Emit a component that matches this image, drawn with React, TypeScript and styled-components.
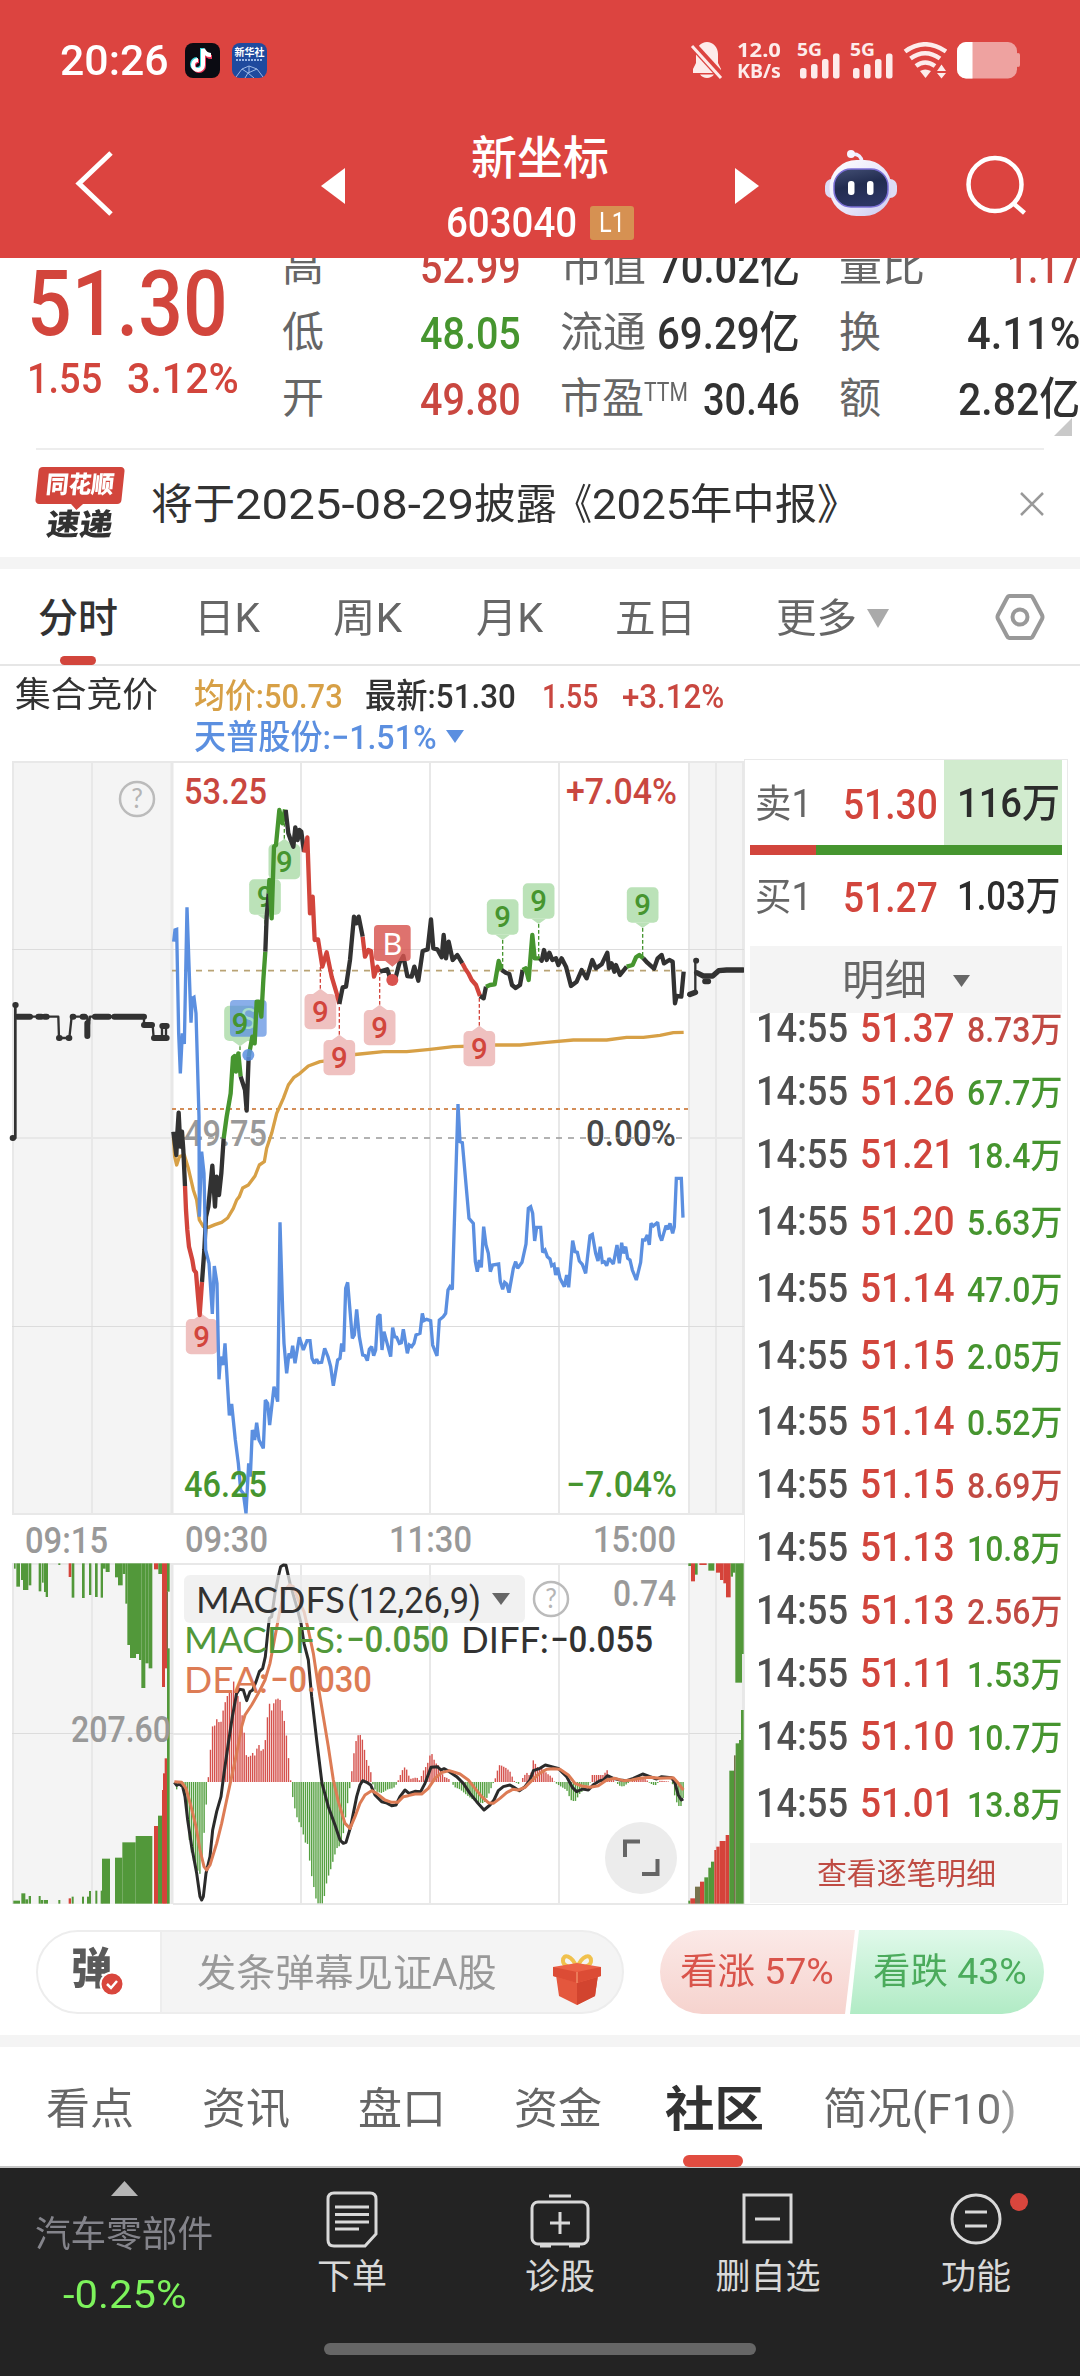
import { ReactNode, useLayoutEffect, useRef, useState } from 'react';
import styled, { createGlobalStyle } from 'styled-components';

const RED = '#d2453c';
const GREEN = '#46952f';
const DARK = '#323232';
const GREY = '#666';
const BLUE = '#5b8fe0';
const GOLD = '#d7a046';
const FONT = `Roboto, 'Noto Sans CJK SC', sans-serif`;

const GlobalStyle = createGlobalStyle`
  * { box-sizing: border-box; }
  body { margin: 0; background: #fff; font-family: ${FONT}; }
  svg { display: block; flex: none; }
`;

const Page = styled.div`
  display: flex;
  flex-direction: column;
  width: 1080px;
  height: 2376px;
  overflow: hidden;
  background: #fff;
`;

/* ---------- text squeezed to a given width ---------- */

const FitBox = styled.span<{ $w: number }>`
  display: inline-block;
  flex: none;
  width: ${(p) => p.$w}px;
  line-height: 1;
`;

const FitInner = styled.span`
  display: inline-block;
  white-space: pre;
  transform-origin: left center;
`;

function Fit({ w, children }: { w: number; children: ReactNode }) {
  const ref = useRef<HTMLSpanElement>(null);
  const [scale, setScale] = useState(1);

  useLayoutEffect(() => {
    if (ref.current) setScale(w / ref.current.offsetWidth);
  }, [w]);

  return (
    <FitBox $w={w}>
      <FitInner ref={ref} style={{ transform: `scaleX(${scale})` }}>
        {children}
      </FitInner>
    </FitBox>
  );
}

/* ---------- header ---------- */

const Header = styled.header`
  height: 258px;
  flex: none;
  background: #dc4440;
  color: #fff;
`;

const StatusBar = styled.div`
  display: flex;
  align-items: center;
  justify-content: space-between;
  height: 120px;
  padding: 0 59px 0 60px;
`;

const StatusGroup = styled.div<{ $gap: number }>`
  display: flex;
  align-items: center;
  gap: ${(p) => p.$gap}px;
`;

const Clock = styled.div`
  font-size: 42px;
  font-weight: 500;
  padding-right: 4px;
`;

const AppIcon = styled.div<{ $bg: string }>`
  display: flex;
  flex-direction: column;
  align-items: center;
  width: 35px;
  height: 35px;
  border-radius: 8px;
  background: ${(p) => p.$bg};
  overflow: hidden;
`;

const TinyTitle = styled.div`
  margin-top: 4px;
  font-size: 10px;
  line-height: 11px;
  font-weight: 700;
`;

const Speed = styled.div`
  display: flex;
  flex-direction: column;
  gap: 1px;
  margin: 0 6px 0 3px;
  font-family: 'Noto Sans', sans-serif;
  font-size: 20px;
  font-weight: 700;
  line-height: 20px;
  color: #fdeceb;
`;

const TitleBar = styled.div`
  display: grid;
  grid-template-columns: 321px 438px 1fr;
  height: 138px;
`;

const BackCell = styled.div`
  padding: 30px 0 0 74px;
`;

const StockCell = styled.div`
  display: flex;
  justify-content: space-between;
  padding-top: 12px;
`;

const Arrow = styled.div`
  padding-top: 36px;
`;

const StockName = styled.div`
  display: flex;
  flex-direction: column;
  align-items: center;
  font-size: 46px;
  line-height: 52px;
  font-weight: 500;
`;

const CodeLine = styled.div`
  display: flex;
  align-items: center;
  gap: 13px;
  height: 36px;
  margin-top: 21px;
  font-size: 42px;
`;

const Level = styled.span`
  display: flex;
  align-items: center;
  justify-content: center;
  width: 44px;
  height: 34px;
  border-radius: 3px;
  background: #d69152;
  font-size: 28px;
  font-weight: 400;
`;

const HeaderTools = styled.div`
  display: flex;
  padding: 28px 0 0 64px;
  gap: 66px;
`;

/* ---------- quote ---------- */

const Quote = styled.section`
  display: flex;
  height: 190px;
  flex: none;
  overflow: hidden;
  position: relative;
`;

const PriceBlock = styled.div`
  flex: none;
  width: 282px;
  padding: 0 0 0 27px;
  color: ${RED};
`;

const Price = styled.div`
  height: 90px;
  display: flex;
  align-items: center;
  padding-top: 3px;
  font-size: 90px;
  font-weight: 500;
`;

const Change = styled.div`
  display: flex;
  align-items: center;
  gap: 25px;
  height: 60px;
  font-size: 43px;
  font-weight: 500;
`;

const StatCol = styled.div<{ $w: number }>`
  width: ${(p) => p.$w}px;
  margin: -24px 39px 0 0;
  flex: none;

  &:last-of-type {
    margin-right: 0;
  }
`;

const Stat = styled.div`
  display: flex;
  align-items: center;
  justify-content: space-between;
  height: 66px;
  font-size: 42px;
`;

const StatLabel = styled.span`
  color: ${GREY};
  display: flex;
  white-space: nowrap;
`;

const Sup = styled.span`
  font-size: 25px;
  line-height: 1;
  padding-top: 2px;
`;

const StatValue = styled.span<{ $c?: string }>`
  color: ${(p) => p.$c || DARK};
  font-size: 45px;
  font-weight: 500;
  display: flex;
`;

const Corner = styled.div`
  position: absolute;
  left: 1054px;
  top: 160px;
  border-left: 18px solid transparent;
  border-bottom: 18px solid #c9c9c9;
`;

/* ---------- notice ---------- */

const Notice = styled.section`
  display: flex;
  align-items: center;
  height: 109px;
  flex: none;
  margin: 0 36px;
  border-top: 2px solid #ededed;
  font-size: 42px;
  color: ${DARK};
`;

const NoticeLogo = styled.div`
  display: flex;
  flex-direction: column;
  align-items: center;
  width: 88px;
  margin-right: 27px;
`;

const NoticeText = styled.div`
  display: flex;
  padding-top: 2px;
`;

const LogoBubble = styled.div`
  position: relative;
  width: 86px;
  height: 37px;
  border-radius: 4px;
  background: ${RED};
  color: #fff;
  font-size: 24px;
  font-weight: 900;
  line-height: 36px;
  text-align: center;
  transform: skewX(-6deg);

  &::after {
    content: '';
    position: absolute;
    left: 36px;
    bottom: -6px;
    border: 6px solid transparent;
    border-bottom: none;
    border-top-color: ${RED};
  }
`;

const LogoText = styled.div`
  margin-top: 5px;
  font-size: 30px;
  line-height: 32px;
  font-weight: 900;
  transform: skewX(-8deg);
`;

const NoticeClose = styled.div`
  margin-left: auto;
`;

const Band = styled.div`
  height: 12px;
  flex: none;
  background: #f4f4f4;
`;

/* ---------- period tabs ---------- */

const PeriodTabs = styled.nav`
  display: flex;
  align-items: center;
  height: 97px;
  flex: none;
  padding: 0 35px 0 38px;
  border-bottom: 2px solid #e6e6e6;
`;

const Period = styled.div<{ $active?: boolean; $ml?: number }>`
  position: relative;
  display: flex;
  align-items: center;
  gap: 10px;
  height: 95px;
  padding-top: 4px;
  margin-left: ${(p) => p.$ml || 0}px;
  font-size: 40px;
  font-weight: ${(p) => (p.$active ? 500 : 400)};
  color: ${(p) => (p.$active ? DARK : GREY)};

  &::after {
    content: '';
    display: ${(p) => (p.$active ? 'block' : 'none')};
    position: absolute;
    left: 22px;
    bottom: -1px;
    width: 36px;
    height: 9px;
    border-radius: 5px;
    background: ${RED};
  }
`;

const HexCell = styled.div`
  margin-left: auto;
`;

/* ---------- legend ---------- */

const Legend = styled.div`
  display: flex;
  height: 93px;
  flex: none;
  padding: 9px 0 0 15px;
  font-size: 35px;
  color: ${DARK};
`;

const LegendLines = styled.div`
  margin-left: 36px;
`;

const LegendLine = styled.div`
  display: flex;
  align-items: center;
  height: 41px;
  font-size: 34px;
`;

const LegendItem = styled.span<{ $c: string; $mr?: number }>`
  display: flex;
  align-items: center;
  margin-right: ${(p) => p.$mr || 0}px;
  color: ${(p) => p.$c};
  font-weight: 500;
`;

const LegendName = styled.div`
  display: flex;
  align-items: center;
  height: 41px;
`;

/* ---------- chart + order book ---------- */

const Market = styled.section`
  display: flex;
  height: 1146px;
  flex: none;
`;

const Book = styled.aside`
  display: flex;
  flex-direction: column;
  width: 324px;
  padding: 0 5px;
  border: 1px solid #e9e9e9;
`;

const BookRow = styled.div<{ $h: number }>`
  display: grid;
  grid-template-columns: 89px 105px 118px;
  height: ${(p) => p.$h}px;
  flex: none;
  font-size: 43px;
`;

const BookSide = styled.div`
  display: flex;
  align-items: center;
  padding: 3px 0 0 5px;
  color: ${GREY};
  font-size: 39px;
`;

const BookPrice = styled.div`
  display: flex;
  align-items: center;
  padding: 3px 0 0 4px;
  color: ${RED};
  font-weight: 500;
`;

const BookVol = styled.div<{ $fill?: boolean }>`
  display: flex;
  align-items: center;
  justify-content: flex-end;
  padding: 3px 2px 0 0;
  font-size: 40px;
  font-weight: 500;
  color: #2c2c2c;
  background: ${(p) => (p.$fill ? '#d1ebce' : 'none')};
`;

const Ratio = styled.div`
  height: 10px;
  flex: none;
  background: linear-gradient(to right, ${RED} 66px, ${GREEN} 66px);
`;

const DetailHead = styled.div`
  position: relative;
  display: flex;
  align-items: center;
  gap: 26px;
  height: 67px;
  flex: none;
  margin-top: 10px;
  padding: 3px 0 0 92px;
  background: #f4f4f4;
  color: ${GREY};
  font-size: 42px;
`;

const Trades = styled.div`
  flex: 1;
  overflow: hidden;
`;

const TradeList = styled.div`
  margin-top: -15px;
`;

const Trade = styled.div<{ $gap: number }>`
  display: flex;
  align-items: center;
  height: 60px;
  margin-top: ${(p) => p.$gap}px;
  padding-left: 6px;
  font-size: 41px;
  font-weight: 500;
  color: #505050;
`;

const TradePrice = styled.span`
  display: flex;
  margin: 0 12px;
  color: ${RED};
`;

const TradeVol = styled.span<{ $up?: boolean }>`
  display: flex;
  padding-top: 5px;
  font-size: 35px;
  color: ${(p) => (p.$up ? '#c14a43' : GREEN)};
`;

const AllTrades = styled.div`
  display: flex;
  align-items: center;
  justify-content: center;
  height: 60px;
  flex: none;
  margin-bottom: 1px;
  padding-top: 2px;
  background: #f4f4f4;
  color: #bf4b43;
  font-size: 30px;
`;

/* ---------- danmaku ---------- */

const Danmaku = styled.section`
  display: flex;
  justify-content: space-between;
  height: 130px;
  flex: none;
  padding: 25px 36px 0;
`;

const InputPill = styled.div`
  display: flex;
  width: 588px;
  height: 84px;
  border: 2px solid #ededed;
  border-radius: 42px;
  background: #f4f4f4;
  overflow: hidden;
`;

const DanToggle = styled.div`
  position: relative;
  display: flex;
  align-items: center;
  width: 124px;
  padding: 0 0 6px 33px;
  border-right: 2px solid #ededed;
  background: #fff;
  color: #5a5a5a;
  font-size: 43px;
  font-weight: 900;
`;

const DanCheck = styled.div`
  position: absolute;
  left: 61px;
  top: 39px;
`;

const DanHint = styled.div`
  display: flex;
  align-items: center;
  padding: 2px 0 0 35px;
  font-size: 38px;
  color: #999;
`;

const GiftCell = styled.div`
  padding: 21px 0 0 55px;
`;

const Votes = styled.div`
  display: flex;
  width: 384px;
  height: 84px;
  border-radius: 42px;
  overflow: hidden;
`;

const Vote = styled.div<{ $up?: boolean }>`
  display: flex;
  align-items: center;
  width: ${(p) => (p.$up ? 195 : 194)}px;
  margin-left: ${(p) => (p.$up ? 0 : -5)}px;
  padding-left: ${(p) => (p.$up ? 20 : 23)}px;
  font-size: 36px;
  color: ${(p) => (p.$up ? '#d9544b' : '#4bab5c')};
  background: ${(p) =>
    p.$up ? 'linear-gradient(#fbe9e7, #f6d3ce)' : 'linear-gradient(#e0f9ea, #b1ebc5)'};
  clip-path: ${(p) =>
    p.$up
      ? 'polygon(0 0, 100% 0, calc(100% - 10px) 100%, 0 100%)'
      : 'polygon(9px 0, 100% 0, 100% 100%, 0 100%)'};
`;

/* ---------- section tabs and bottom bar ---------- */

const SectionTabs = styled.nav`
  display: flex;
  height: 121px;
  flex: none;
  padding-left: 46px;
  border-bottom: 2px solid #c6c6c6;
`;

const SectionTab = styled.div<{ $active?: boolean; $ml?: number; $fade?: boolean }>`
  position: relative;
  display: flex;
  align-items: center;
  height: 125px;
  margin-left: ${(p) => p.$ml || 0}px;
  font-size: ${(p) => (p.$active ? 48 : 43)}px;
  font-weight: ${(p) => (p.$active ? 700 : 400)};
  color: ${(p) => (p.$active ? DARK : GREY)};
  ${(p) => p.$fade && 'mask-image: linear-gradient(to right, #000 85%, rgba(0, 0, 0, 0.5));'}

  &::after {
    content: '';
    display: ${(p) => (p.$active ? 'block' : 'none')};
    position: absolute;
    left: 18px;
    top: 108px;
    width: 60px;
    height: 12px;
    border-radius: 6px;
    background: #e14c40;
  }
`;

const BottomBar = styled.footer`
  position: relative;
  display: grid;
  grid-template-columns: 248px repeat(4, 208px);
  height: 208px;
  flex: none;
  background: #232323;
`;

const Sector = styled.div`
  display: flex;
  flex-direction: column;
  align-items: center;
  padding-top: 13px;
  color: #84848b;
  font-size: 36px;
`;

const SectorName = styled.div`
  margin-top: 18px;
  height: 40px;
`;

const SectorChange = styled.div`
  margin-top: 19px;
  color: #7df35c;
  font-size: 38px;
`;

const Action = styled.div`
  position: relative;
  display: flex;
  flex-direction: column;
  align-items: center;
  padding-top: 22px;
  color: #d9d9d9;
  font-size: 35px;
  line-height: 40px;
`;

const ActionLabel = styled.div`
  margin-top: 10px;
`;

const Dot = styled.div`
  position: absolute;
  left: 138px;
  top: 25px;
  width: 18px;
  height: 18px;
  border-radius: 50%;
  background: #d9463d;
`;

const HomeBar = styled.div`
  position: absolute;
  left: 324px;
  top: 175px;
  width: 432px;
  height: 12px;
  border-radius: 6px;
  background: #666;
`;

/* ---------- small drawings ---------- */

function Triangle({ w, h, dir, color }: { w: number; h: number; dir: string; color: string }) {
  const shapes: Record<string, string> = {
    left: `${w},0 0,${h / 2} ${w},${h}`,
    right: `0,0 ${w},${h / 2} 0,${h}`,
    up: `0,${h} ${w / 2},0 ${w},${h}`,
    down: `0,0 ${w},0 ${w / 2},${h}`,
  };
  return (
    <svg width={w} height={h}>
      <polygon points={shapes[dir]} fill={color} />
    </svg>
  );
}

function Signal() {
  return (
    <svg width="43" height="37" viewBox="0 0 43 37" fill="#fdeceb" overflow="visible">
      <text
        x="0"
        y="14"
        fontSize="18"
        fontWeight="700"
        fontFamily="Noto Sans"
        textLength="25"
        lengthAdjust="spacingAndGlyphs"
      >
        5G
      </text>
      <rect x="3" y="26" width="6.500" height="10.500" rx="2.500" />
      <rect x="14" y="22" width="6.500" height="14.500" rx="2.500" />
      <rect x="25" y="17" width="6.500" height="19.500" rx="2.500" />
      <rect x="36" y="11.500" width="6.500" height="25" rx="2.500" />
    </svg>
  );
}

function StatusIcons() {
  return (
    <StatusGroup $gap={10}>
      <svg width="34" height="38" viewBox="0 0 34 38">
        <path
          d="M17 1C23 1 28 6 28 13V22L31 28V32H3V28L6 22V13C6 6 11 1 17 1zM10 33.500H24C21 38 13 38 10 33.500z"
          fill="#fdeceb"
        />
        <path d="M0 1L31 35" stroke="#dc4440" strokeWidth="8" />
        <path d="M2 5L31 37" stroke="#fdeceb" strokeWidth="3" />
      </svg>
      <Speed>
        <Fit w={44}>12.0</Fit>
        <Fit w={44}>KB/s</Fit>
      </Speed>
      <StatusGroup $gap={10}>
        <Signal />
        <Signal />
      </StatusGroup>
      <svg width="44" height="37" viewBox="0 0 44 37" fill="none" stroke="#fdeceb" strokeWidth="4.500">
        <path d="M2 9.500Q22 -5 43 9.500" />
        <path d="M7.500 16.500Q22 6 37 16.500" />
        <path d="M13 24Q22 17 32 24" />
        <path d="M17 29Q22 26 28 29L22.500 36z" fill="#fdeceb" stroke="none" />
        <path d="M34 29L38.500 22.500L43 29zM34 31L38.500 36.500L43 31z" fill="#fdeceb" stroke="none" />
      </svg>
      <svg width="64" height="37" viewBox="0 0 64 37">
        <rect x="0" y="0" width="60" height="36.500" rx="9" fill="#eea2a0" />
        <rect x="59" y="11" width="4" height="14" rx="2" fill="#eea2a0" />
        <path d="M9 0H15.500V36.500H9A9 9 0 0 1 0 27.500V9A9 9 0 0 1 9 0z" fill="#fff" />
      </svg>
    </StatusGroup>
  );
}

function Robot() {
  return (
    <svg width="76" height="72" viewBox="0 0 76 72">
      <defs>
        <linearGradient id="shell" x1="0" y1="0" x2="1" y2="1">
          <stop offset="0" stopColor="#fff" />
          <stop offset="0.6" stopColor="#e6e4fa" />
          <stop offset="1" stopColor="#c9c8ee" />
        </linearGradient>
        <linearGradient id="visor" x1="0" y1="0" x2="0.3" y2="1">
          <stop offset="0" stopColor="#434f74" />
          <stop offset="0.5" stopColor="#222c50" />
          <stop offset="1" stopColor="#2c3563" />
        </linearGradient>
      </defs>
      <path d="M39 14Q38 6 30 6" stroke="#efedff" strokeWidth="3.500" fill="none" />
      <circle cx="28" cy="6" r="4" fill="#f6f4ff" />
      <rect x="2" y="31" width="72" height="19" rx="7" fill="#dddcf5" />
      <rect x="6.500" y="12" width="62" height="56" rx="27" fill="url(#shell)" />
      <rect x="11" y="21" width="54" height="38" rx="17" fill="url(#visor)" stroke="#7b6fd6" strokeWidth="1.500" />
      <rect x="25" y="33" width="6.500" height="14" rx="3" fill="#fff" />
      <rect x="44" y="33" width="6.500" height="14" rx="3" fill="#fff" />
    </svg>
  );
}

function Gift() {
  return (
    <svg width="50" height="53" viewBox="0 0 50 53">
      <path d="M25 15C20 2 11 0 11 8c0 5 8 7 14 7 6 0 14-2 14-7 0-8-9-6-14 7z" fill="none" stroke="#f0c14d" strokeWidth="4" />
      <path d="M4 22 L25 27 L46 22 L43 43 L25 52 L7 43z" fill="#e4573d" />
      <path d="M25 27 L46 22 L43 43 L25 52z" fill="#d2442f" />
      <path d="M1 14 L25 10 L49 14 V23 L25 30 L1 23z" fill="#ec6247" />
      <path d="M1 14 L25 19 L49 14 V23 L25 30 L1 23z" fill="#dc4c35" />
      <path d="M25 19 V30" stroke="#f08a66" strokeWidth="1.500" />
    </svg>
  );
}

/* ---------- chart data, in thirds of a pixel ---------- */

const PRICE: [string, string][] = [
  [DARK, '520,1145 529,1215 532,1150 536,1088 541,1190 546,1145 550,1200 555,1308'],
  [RED, '555,1308 558,1380 562,1440 567,1490 577,1530 582,1560 588,1568 594,1640 599,1695 606,1596'],
  [DARK, '606,1596 613,1500 618,1400 625,1370 632,1300 637,1247 645,1370 650,1280 657,1335 664,1270 671,1165'],
  [GREEN, '671,1165 680,1100 692,1030 699,922 704,918 708,965 715,910 722,980'],
  [DARK, '722,980 735,1020 740,1082 746,920'],
  [GREEN, '746,920 757,860 764,880 770,755 777,755 784,800 790,690 796,605'],
  [DARK, '796,605 800,500 806,430'],
  [GREEN, '806,430 808,390 815,505 822,290 828,285 838,180 847,220 855,178'],
  [DARK, '857,180 865,250 872,270 880,290 886,232 893,270 898,240 904,245 912,305'],
  [RED, '913,308 922,262 930,490 938,440 944,570 954,568 967,650 980,607 995,680 1010,730 1018,762'],
  [DARK, '1018,762 1028,712 1038,710 1050,630 1062,500 1070,520 1076,500 1088,560'],
  [RED, '1088,560 1095,620 1105,600 1113,603 1122,680 1132,650 1140,665'],
  [DARK, '1140,665 1162,658 1172,690 1185,690 1198,640 1210,618 1222,678 1235,680 1243,650 1255,692 1268,603 1283,598 1293,508 1300,595 1312,598 1325,622 1331,555 1338,625 1346,575 1358,630 1372,615 1387,640'],
  [RED, '1387,640 1395,655 1405,670 1415,690 1428,705 1440,738'],
  [DARK, '1440,738 1451,745 1458,710'],
  [GREEN, '1458,710 1470,705 1484,703 1496,633 1505,660'],
  [DARK, '1505,660 1517,668 1528,672 1536,705 1547,714 1560,705 1568,660'],
  [GREEN, '1568,660 1577,655 1586,690 1597,555 1604,625 1620,625'],
  [DARK, '1620,625 1625,632 1632,600 1640,630 1648,608 1657,630 1668,625 1675,645 1685,625 1698,650 1713,708 1730,695 1745,660 1760,685 1777,630 1788,655 1805,643 1822,608 1827,655 1835,640 1843,665 1848,645 1860,675 1880,650'],
  [GREEN, '1880,650 1898,645 1908,622 1918,615 1930,625'],
  [DARK, '1930,625 1942,638 1962,656 1973,625 1985,615 1992,640 2008,630 2018,635 2025,760 2030,738 2044,740 2051,665'],
];

const AVERAGE =
  '520,1160 524,1220 530,1245 538,1220 553,1215 565,1255 580,1320 590,1350 598,1410 610,1430 625,1432 645,1424 665,1417 683,1404 700,1375 710,1350 718,1340 728,1314 745,1305 765,1278 778,1245 793,1235 800,1195 815,1150 830,1090 850,1045 865,1005 882,982 900,970 925,948 960,935 1000,930 1050,915 1080,912 1150,905 1220,905 1290,898 1360,890 1430,888 1480,885 1560,885 1640,877 1720,870 1820,870 1880,862 1930,862 1980,856 2020,848 2051,847';

const PEER =
  '521,575 525,540 530,538 536,850 541,970 547,850 553,882 561,472 573,818 577,745 582,742 588,790 597,1100 598,1400 605,1205 612,1270 617,1500 627,1540 637,1692 643,1548 651,1600 657,1888 662,1820 670,1845 675,1780 688,1996 695,1962 706,2070 715,2140 722,2220 730,2230 738,2290 746,2140 751,2180 757,2040 764,2070 770,2018 777,2070 790,2095 796,1950 803,1960 809,2025 822,1910 833,1955 840,1417 848,1680 852,1780 860,1870 867,1810 872,1825 878,1787 885,1840 898,1762 910,1800 921,1772 930,1772 936,1825 943,1840 950,1828 955,1838 965,1837 974,1795 984,1820 992,1850 1000,1907 1013,1830 1020,1825 1025,1780 1031,1805 1037,1615 1043,1597 1057,1765 1063,1755 1070,1678 1078,1760 1088,1815 1095,1817 1102,1832 1108,1798 1115,1790 1121,1817 1127,1800 1133,1700 1140,1693 1146,1800 1152,1745 1160,1775 1172,1820 1178,1733 1184,1760 1190,1762 1198,1780 1204,1778 1210,1738 1222,1810 1228,1785 1235,1790 1242,1780 1248,1755 1260,1750 1267,1690 1272,1712 1280,1708 1292,1712 1298,1785 1311,1818 1318,1710 1330,1700 1337,1690 1344,1620 1350,1610 1357,1618 1374,1062 1380,1175 1387,1178 1407,1405 1420,1420 1426,1535 1432,1565 1438,1530 1444,1552 1451,1430 1458,1485 1465,1510 1471,1565 1478,1545 1496,1542 1501,1595 1508,1618 1514,1597 1520,1602 1527,1628 1540,1555 1547,1535 1553,1555 1566,1537 1578,1482 1585,1375 1592,1370 1598,1390 1604,1473 1610,1432 1622,1432 1628,1507 1635,1500 1642,1520 1650,1527 1655,1547 1662,1543 1667,1575 1673,1553 1680,1585 1693,1610 1700,1575 1706,1612 1718,1472 1725,1505 1732,1507 1738,1533 1747,1543 1757,1570 1770,1457 1777,1453 1787,1510 1794,1533 1801,1490 1807,1537 1813,1535 1820,1547 1827,1525 1840,1542 1851,1485 1858,1540 1865,1478 1870,1510 1877,1490 1883,1525 1890,1530 1897,1560 1909,1590 1922,1537 1928,1470 1935,1470 1942,1455 1948,1485 1953,1420 1960,1428 1973,1417 1979,1457 1985,1472 1998,1427 2004,1438 2010,1420 2018,1450 2023,1430 2029,1285 2044,1285 2049,1403';

const DIFF =
  '523,697 530,706 538,702 548,710 555,740 563,810 575,890 590,970 600,1040 605,1050 610,1040 618,970 630,920 638,840 650,785 663,740 672,670 685,580 697,500 710,430 718,418 730,420 740,452 750,425 758,420 768,395 778,365 788,355 796,320 803,250 808,205 815,200 825,130 835,80 842,50 850,45 858,46 870,100 890,170 903,220 912,280 925,330 935,440 950,570 966,700 985,770 1005,825 1020,870 1030,880 1038,877 1052,830 1070,740 1080,705 1088,692 1100,697 1112,705 1125,735 1145,755 1158,758 1175,767 1188,765 1200,740 1215,720 1227,730 1245,724 1262,725 1275,700 1293,652 1312,650 1323,660 1332,656 1348,665 1370,680 1390,700 1410,730 1430,755 1452,780 1470,765 1482,750 1495,722 1510,710 1530,705 1542,712 1558,722 1575,710 1590,690 1600,662 1620,655 1636,645 1655,650 1675,655 1700,680 1717,712 1730,725 1748,717 1765,720 1780,704 1798,693 1810,690 1822,677 1840,685 1860,690 1880,692 1900,685 1928,672 1950,680 1970,687 1985,680 2015,683 2025,700 2035,735 2044,750 2050,747';

const DEA =
  '523,695 545,697 558,715 572,765 588,830 600,900 612,950 620,960 630,945 650,880 665,820 680,750 695,680 710,610 725,530 735,495 755,465 775,430 795,390 810,340 825,260 840,180 855,120 868,105 880,110 895,150 912,185 925,240 940,310 955,410 970,500 985,590 1000,690 1015,755 1035,820 1050,835 1065,800 1080,760 1095,735 1115,722 1130,730 1155,750 1175,757 1193,757 1210,740 1225,737 1245,732 1265,732 1285,715 1305,685 1325,668 1348,662 1380,672 1405,690 1425,715 1445,740 1465,758 1480,760 1500,745 1520,728 1538,718 1555,720 1575,712 1595,692 1615,673 1640,658 1660,656 1680,658 1705,675 1725,700 1745,708 1770,712 1795,707 1820,690 1845,685 1870,692 1895,690 1920,685 1950,682 1980,685 2020,683 2035,700 2050,720';

const HISTOGRAM =
  '525,700 530,718 536,700 547,715 555,740 570,890 585,950 600,972 608,900 613,840 620,745 626,668 632,590 638,525 645,527 651,505 657,517 664,515 670,477 676,455 683,435 695,420 702,390 708,430 715,440 722,462 728,510 734,560 740,628 747,618 753,617 759,607 765,618 772,590 778,584 784,605 790,597 797,565 803,492 810,453 816,488 823,450 836,445 842,452 848,492 855,522 861,572 867,642 873,703 880,755 890,800 905,835 918,885 925,880 931,962 938,990 945,1033 951,1060 968,1060 975,1030 981,990 990,965 1000,930 1010,895 1022,885 1030,850 1038,790 1045,745 1051,700 1058,642 1064,590 1070,565 1077,550 1083,558 1090,577 1096,617 1102,638 1108,652 1114,672 1120,712 1130,725 1145,729 1165,717 1180,715 1188,705 1196,688 1204,667 1210,655 1217,650 1223,668 1230,687 1250,682 1260,693 1268,665 1275,655 1285,635 1293,603 1300,625 1308,640 1320,650 1330,680 1345,685 1355,699 1365,712 1380,718 1400,735 1420,750 1440,758 1452,760 1465,735 1477,705 1488,680 1496,645 1505,647 1520,655 1532,667 1540,690 1548,698 1555,702 1563,695 1570,680 1580,668 1592,680 1598,628 1605,640 1615,655 1625,650 1640,670 1655,680 1665,698 1680,708 1700,720 1712,750 1725,755 1740,730 1755,718 1770,700 1777,675 1810,675 1821,660 1830,680 1845,695 1860,708 1870,710 1883,700 1900,690 1920,683 1938,688 1950,700 1965,707 1980,692 2010,695 2020,705 2025,745 2035,768 2045,768 2050,740';

// x, width, far end; hanging from the top or standing on the bottom edge
type Bar = [number, number, number, 'r' | 'g' | 'd'];

const TOP_BARS: Bar[] = [
  [42, 5, 56, 'g'], [49, 11, 110, 'g'], [63, 6, 90, 'g'], [69, 16, 120, 'g'], [86, 8, 106, 'g'],
  [116, 8, 124, 'g'], [126, 5, 98, 'g'], [132, 6, 126, 'g'], [137, 7, 141, 'g'], [175, 6, 45, 'g'],
  [206, 8, 81, 'r'], [215, 8, 143, 'g'], [246, 8, 144, 'g'], [267, 7, 135, 'g'], [285, 8, 141, 'g'],
  [302, 7, 143, 'g'], [308, 9, 56, 'g'], [317, 12, 66, 'g'], [345, 9, 82, 'g'], [354, 14, 106, 'g'],
  [368, 8, 72, 'g'], [376, 6, 161, 'g'], [382, 8, 285, 'g'], [390, 18, 324, 'g'], [408, 9, 312, 'g'],
  [417, 7, 330, 'g'], [424, 12, 414, 'g'], [436, 10, 340, 'g'], [446, 11, 355, 'g'], [462, 13, 58, 'r'],
  [475, 11, 72, 'g'], [486, 9, 411, 'r'], [495, 7, 355, 'r'], [501, 8, 125, 'g'],
  [2065, 8, 48, 'g'], [2073, 12, 94, 'r'], [2085, 8, 74, 'g'], [2098, 22, 45, 'r'], [2125, 18, 62, 'g'],
  [2148, 12, 68, 'r'], [2160, 10, 90, 'r'], [2170, 8, 100, 'r'], [2178, 14, 142, 'r'], [2192, 7, 80, 'g'],
  [2199, 7, 68, 'g'], [2206, 20, 398, 'g'], [2225, 6, 312, 'g'],
];

const BOTTOM_BARS: Bar[] = [
  [40, 20, 1052, 'g'], [64, 12, 1030, 'g'], [76, 8, 1048, 'g'], [86, 7, 1038, 'g'], [116, 6, 1038, 'g'],
  [122, 8, 1050, 'g'], [132, 12, 1050, 'g'], [175, 6, 1050, 'g'], [206, 7, 1045, 'r'], [215, 6, 1040, 'g'],
  [246, 6, 1040, 'g'], [261, 6, 1040, 'g'], [267, 6, 1023, 'g'], [286, 6, 1022, 'g'], [302, 5, 1022, 'g'],
  [306, 24, 926, 'g'], [345, 22, 923, 'g'], [367, 40, 877, 'g'], [407, 50, 858, 'g'], [462, 12, 828, 'r'],
  [474, 12, 797, 'g'], [486, 4, 720, 'r'], [489, 7, 670, 'r'], [494, 8, 625, 'r'], [501, 8, 295, 'g'],
  [2065, 6, 1052, 'g'], [2071, 14, 1045, 'r'], [2085, 15, 1010, 'd'], [2100, 13, 995, 'r'],
  [2113, 12, 982, 'g'], [2125, 8, 953, 'g'], [2133, 10, 935, 'g'], [2143, 6, 900, 'r'], [2149, 10, 890, 'r'],
  [2159, 18, 873, 'r'], [2177, 11, 855, 'r'], [2188, 14, 662, 'g'], [2202, 5, 616, 'd'], [2207, 10, 580, 'g'],
  [2217, 6, 570, 'g'], [2223, 8, 480, 'g'],
];

// centre x, box top, end of the dashed leader, pointer direction
const NINES: { x: number; top: number; to: number; up?: boolean; color: string }[] = [
  { x: 853, top: 282, to: 220, up: true, color: GREEN },
  { x: 795, top: 388, to: 600, color: GREEN },
  { x: 720, top: 767, to: 910, color: GREEN },
  { x: 961, top: 732, to: 650, up: true, color: RED },
  { x: 1018, top: 870, to: 765, up: true, color: RED },
  { x: 1139, top: 780, to: 670, up: true, color: RED },
  { x: 1438, top: 843, to: 740, up: true, color: RED },
  { x: 1508, top: 448, to: 655, color: GREEN },
  { x: 1616, top: 400, to: 620, color: GREEN },
  { x: 1928, top: 412, to: 620, color: GREEN },
  { x: 605, top: 567, to: 552, up: true, color: RED },
];

const parse = (s: string) => s.split(' ').map((p) => p.split(',').map(Number));

function histogramBars() {
  const pts = parse(HISTOGRAM);
  const out: { x: number; y: number }[] = [];
  let i = 0;
  for (let x = 530; x <= 2051; x += 6.33) {
    while (i < pts.length - 2 && pts[i + 1][0] < x) i++;
    const [x0, y0] = pts[i];
    const [x1, y1] = pts[i + 1];
    out.push({ x, y: y0 + ((y1 - y0) * Math.min(1, (x - x0) / (x1 - x0))) });
  }
  return out;
}

const BAR_COLORS = { r: '#d5433a', g: '#52983a', d: '#76724c' };

function ChartText(props: {
  x: number; y: number; w: number; color: string; size?: number; weight?: number; family?: string; children: string;
}) {
  return (
    <text
      x={props.x}
      y={props.y}
      fontSize={props.size || 36}
      fontWeight={props.weight || 500}
      fontFamily={props.family || 'Roboto'}
      fill={props.color}
      textLength={props.w}
      lengthAdjust="spacingAndGlyphs"
    >
      {props.children}
    </text>
  );
}

function Nine({ x, top, to, up, color }: (typeof NINES)[number]) {
  const fill = color === RED ? '#efc1c0' : '#bbe2b8';
  const bottom = top + 106;
  const tip = up ? top - 16 : bottom + 16;
  const base = up ? top : bottom;
  return (
    <g>
      <line x1={x} x2={x} y1={tip} y2={to} stroke={color} strokeWidth="4" strokeDasharray="11 7" />
      <rect x={x - 47.500} y={top} width="95" height="106" rx="15" fill={fill} />
      <polygon points={`${x - 22},${base} ${x},${tip} ${x + 22},${base}`} fill={fill} />
      <text x={x} y={top + 84} fontSize="88" fontWeight="500" fontFamily="Roboto" textAnchor="middle" fill={color}>
        9
      </text>
    </g>
  );
}

function HelpMark({ x, y }: { x: number; y: number }) {
  return (
    <g>
      <circle cx={x} cy={y} r="17" fill="none" stroke="#bbb" strokeWidth="2.500" />
      <text x={x} y={y + 9} fontSize="26" fontFamily="Lato" textAnchor="middle" fill="#b5b5b5">
        ?
      </text>
    </g>
  );
}

function Chart() {
  return (
    <svg width="744" height="1146" viewBox="0 759 744 1146">
      {/* panes and grid */}
      <g fill="#f4f4f4">
        <rect x="13" y="762" width="160" height="752" />
        <rect x="689" y="762" width="55" height="752" />
        <rect x="13" y="1564" width="160" height="340" />
        <rect x="689" y="1564" width="55" height="340" />
      </g>
      <g stroke="#e8e8e8" strokeWidth="2">
        {[13, 92, 301, 430, 559, 689, 716, 743].map((x) => (
          <path key={x} d={`M${x} 762V1514M${x} 1564V1904`} />
        ))}
        <path d="M172 762V1514M172 1564V1904" strokeWidth="3" />
        <path d="M12 762H744M12 1514H744M12 1564H744M173 1904H744M173 1734H689" />
        <path d="M12 949.500H744M12 1326.500H744M12 1733.500H173M689 1733.500H744" stroke="#dcdcdc" strokeWidth="1" />
        <path d="M12 1138H172M689 1138H744" />
      </g>

      <HelpMark x={137} y={799} />
      <ChartText x={184} y={804} w={83} color="#c94740">53.25</ChartText>
      <ChartText x={566} y={804} w={111} color="#c94740">+7.04%</ChartText>
      <ChartText x={184} y={1146} w={83} color="#999">49.75</ChartText>
      <ChartText x={586} y={1146} w={90} color="#484848">0.00%</ChartText>
      <ChartText x={566} y={1497} w={111} color={GREEN}>−7.04%</ChartText>
      <ChartText x={25} y={1553} w={83} color="#999">09:15</ChartText>
      <ChartText x={185} y={1552} w={83} color="#999">09:30</ChartText>
      <ChartText x={389} y={1552} w={83} color="#999">11:30</ChartText>
      <ChartText x={593} y={1552} w={83} color="#999">15:00</ChartText>

      {/* minute lines */}
      <g transform="translate(0 750) scale(0.33333)" fill="none" strokeLinejoin="round">
        <path d="M516 662H2051" stroke="#b9a375" strokeWidth="5" strokeDasharray="18 18" />
        <path d="M516 1077H2065" stroke="#d38d58" strokeWidth="6" strokeDasharray="12 12" />
        <path d="M516 1164H2051" stroke="#999" strokeWidth="5" strokeDasharray="18 18" />

        <g stroke={DARK} strokeLinecap="round">
          <path d="M46 765V1164H38" strokeWidth="8" />
          <path
            d="M46 800H175L177 864H208L215 800H262V858L270 800H432V825H458L461 864H486V828H498V864"
            strokeWidth="7"
          />
          <path
            d="M52 800H90M115 800H124M134 800H140M177 864H179M206 864H208M218 800H220M248 800H254M262 820V858M285 800H326M343 800H432M432 825H456M462 864H500M487 828H500M46 765H47M38 1164H39"
            strokeWidth="18"
          />
          <path d="M2065 735L2086 727V632" strokeWidth="7" />
          <path d="M2070 733L2086 727M2088 632H2089M2115 694H2125" strokeWidth="17" />
          <path d="M2090 668L2110 678L2138 678L2156 662L2180 660H2230" strokeWidth="16" />
        </g>

        <polyline points={AVERAGE} stroke={GOLD} strokeWidth="10" />
        {NINES.slice(0, 10).map((n) => (
          <Nine key={n.x} {...n} />
        ))}
        <g transform="translate(0 1140)">
          <Nine {...NINES[10]} />
        </g>
        <g>
          <rect x="690" y="750" width="110" height="110" rx="12" fill="#5b8fe0" fillOpacity="0.72" />
          <text x="745" y="836" fontSize="88" fontFamily="Lato" textAnchor="middle" fill="#a6dccb">S</text>
          <text x="720" y="851" fontSize="88" fontWeight="500" fontFamily="Roboto" textAnchor="middle" fill={GREEN}>9</text>
        </g>
        {PRICE.map(([color, points]) => (
          <polyline key={points} points={points} stroke={color} strokeWidth="13" strokeLinecap="butt" />
        ))}
        <polyline points={PEER} stroke={BLUE} strokeWidth="10" strokeLinejoin="miter" strokeMiterlimit="2" />
        <circle cx="745" cy="915" r="18" fill="#5b8fe0" fillOpacity="0.85" />
        <circle cx="1177" cy="690" r="18" fill="#d9534f" />
        <path
          d="M1134 525H1220Q1232 525 1232 537V621Q1232 633 1220 633H1198L1177 650L1156 633H1134Q1122 633 1122 621V537Q1122 525 1134 525z"
          fill="#d7534e"
          fillOpacity="0.82"
        />
        <text x="1177" y="614" fontSize="92" fontFamily="Lato" textAnchor="middle" fill="#fff">B</text>
      </g>
      <ChartText x={184} y={1497} w={83} color={GREEN}>46.25</ChartText>

      {/* call auction volume and MACD */}
      <g transform="translate(0 1550) scale(0.33333)" fill="none" strokeLinejoin="round">
        {TOP_BARS.map(([x, w, y, c]) => (
          <rect key={x} x={x} y="40" width={w} height={y - 40} fill={BAR_COLORS[c]} />
        ))}
        {BOTTOM_BARS.map(([x, w, y, c]) => (
          <rect key={x} x={x} y={y} width={w} height={1061 - y} fill={BAR_COLORS[c]} />
        ))}
        <path d="M502 125V300" stroke="#76724c" strokeWidth="4" />
        {histogramBars().map(({ x, y }) => (
          <rect
            key={x}
            x={x - 2}
            y={Math.min(y, 696)}
            width="4.200"
            height={Math.abs(y - 696)}
            fill={y < 696 ? '#d5514c' : '#55a041'}
          />
        ))}
        <polyline points={DIFF} stroke="#2b2b2b" strokeWidth="9" />
        <polyline points={DEA} stroke="#dd7c55" strokeWidth="9" />
      </g>
      <ChartText x={71} y={1742} w={100} color="#999">207.60</ChartText>

      <rect x="184" y="1575" width="341" height="48" rx="6" fill="#ececec" fillOpacity="0.75" />
      <ChartText x={196} y={1613} w={149} size={37} weight={400} family="Lato" color={DARK}>MACDFS</ChartText>
      <ChartText x={347} y={1613} w={134} size={36} weight={400} color={DARK}>(12,26,9)</ChartText>
      <polygon points="492,1593 510,1593 501,1605" fill="#666" />
      <HelpMark x={551} y={1599} />
      <ChartText x={613} y={1606} w={63} color="#999">0.74</ChartText>
      <ChartText x={184} y={1653} w={160} size={37} weight={400} family="Lato" color="#52983a">MACDFS:</ChartText>
      <ChartText x={346} y={1652} w={103} color="#52983a">−0.050</ChartText>
      <ChartText x={461} y={1653} w={88} size={37} weight={400} family="Lato" color={DARK}>DIFF:</ChartText>
      <ChartText x={550} y={1652} w={103} color={DARK}>−0.055</ChartText>
      <ChartText x={184} y={1693} w={84} size={37} weight={400} family="Lato" color="#dd7c55">DEA:</ChartText>
      <ChartText x={270} y={1692} w={102} color="#dd7c55">−0.030</ChartText>

      <circle cx="641" cy="1858" r="36" fill="#ececec" />
      <path d="M625 1857V1841.500H640M642 1874H657.500V1859" fill="none" stroke="#666" strokeWidth="4" />
    </svg>
  );
}

const TRADES: { price: string; vol: string; up?: boolean; gap: number }[] = [
  { price: '51.37', vol: '8.73万', up: true, gap: 0 },
  { price: '51.26', vol: '67.7万', gap: 3 },
  { price: '51.21', vol: '18.4万', gap: 3 },
  { price: '51.20', vol: '5.63万', gap: 7 },
  { price: '51.14', vol: '47.0万', gap: 7 },
  { price: '51.15', vol: '2.05万', gap: 7 },
  { price: '51.14', vol: '0.52万', gap: 6 },
  { price: '51.15', vol: '8.69万', up: true, gap: 3 },
  { price: '51.13', vol: '10.8万', gap: 3 },
  { price: '51.13', vol: '2.56万', up: true, gap: 3 },
  { price: '51.11', vol: '1.53万', gap: 3 },
  { price: '51.10', vol: '10.7万', gap: 3 },
  { price: '51.01', vol: '13.8万', gap: 7 },
];

function OrderBook() {
  return (
    <Book>
      <BookRow $h={85}>
        <BookSide><Fit w={57}>卖1</Fit></BookSide>
        <BookPrice><Fit w={95}>51.30</Fit></BookPrice>
        <BookVol $fill><Fit w={103}>116万</Fit></BookVol>
      </BookRow>
      <Ratio />
      <BookRow $h={81}>
        <BookSide><Fit w={57}>买1</Fit></BookSide>
        <BookPrice><Fit w={95}>51.27</Fit></BookPrice>
        <BookVol><Fit w={103}>1.03万</Fit></BookVol>
      </BookRow>
      <DetailHead>
        <Fit w={85}>明细</Fit>
        <Triangle w={17} h={12} dir="down" color="#666" />
      </DetailHead>
      <Trades>
        <TradeList>
          {TRADES.map((t, i) => (
            <Trade key={i} $gap={t.gap}>
              <Fit w={92}>14:55</Fit>
              <TradePrice><Fit w={95}>{t.price}</Fit></TradePrice>
              <TradeVol $up={t.up}><Fit w={95}>{t.vol}</Fit></TradeVol>
            </Trade>
          ))}
        </TradeList>
      </Trades>
      <AllTrades><Fit w={179}>查看逐笔明细</Fit></AllTrades>
    </Book>
  );
}

function App() {
  return (
    <Page>
      <GlobalStyle />
      <Header>
        <StatusBar>
          <StatusGroup $gap={12}>
            <Clock><Fit w={109}>20:26</Fit></Clock>
            <AppIcon $bg="#0b0b12">
              <svg width="35" height="35" viewBox="0 0 35 35" fill="none" strokeWidth="4">
                <path d="M18 6V22a5 5 0 1 1-5-5" stroke="#38d3da" transform="translate(-1 -1)" />
                <path d="M18 6V22a5 5 0 1 1-5-5M18 7q2 6 8 6" stroke="#ee3a5c" transform="translate(1 1)" />
                <path d="M18 6V22a5 5 0 1 1-5-5M18 6q2 6 8 6" stroke="#fff" />
              </svg>
            </AppIcon>
            <AppIcon $bg="#1f4a9e">
              <TinyTitle>新华社</TinyTitle>
              <svg width="31" height="20" viewBox="0 0 31 20" fill="none" stroke="#9db8e6" strokeWidth="1">
                <path d="M2 2h27" strokeDasharray="2 1" strokeWidth="2" />
                <path d="M2 19L8 11L15 8L23 11L29 19M8 11L14 15L23 11M14 15L11 20M14 15L20 20M15 8V15" />
              </svg>
            </AppIcon>
          </StatusGroup>
          <StatusIcons />
        </StatusBar>
        <TitleBar>
          <BackCell>
            <svg width="42" height="68" viewBox="0 0 42 68" fill="none" stroke="#fff" strokeWidth="5">
              <path d="M37 3L5 33.500L37 64" />
            </svg>
          </BackCell>
          <StockCell>
            <Arrow><Triangle w={24} h={36} dir="left" color="#fff" /></Arrow>
            <StockName>
              新坐标
              <CodeLine>
                <Fit w={131}>603040</Fit>
                <Level><Fit w={26}>L1</Fit></Level>
              </CodeLine>
            </StockName>
            <Arrow><Triangle w={24} h={36} dir="right" color="#fff" /></Arrow>
          </StockCell>
          <HeaderTools>
            <Robot />
            <svg width="64" height="72" viewBox="0 0 64 72" fill="none" stroke="#fff" strokeWidth="4.500">
              <circle cx="30" cy="36.500" r="26.500" />
              <path d="M48 55L59.500 65" />
            </svg>
          </HeaderTools>
        </TitleBar>
      </Header>

      <Quote>
        <PriceBlock>
          <Price><Fit w={201}>51.30</Fit></Price>
          <Change>
            <Fit w={75}>1.55</Fit>
            <Fit w={112}>3.12%</Fit>
          </Change>
        </PriceBlock>
        <StatCol $w={239}>
          <Stat><StatLabel><Fit w={42}>高</Fit></StatLabel><StatValue $c="#c94740"><Fit w={101}>52.99</Fit></StatValue></Stat>
          <Stat><StatLabel><Fit w={42}>低</Fit></StatLabel><StatValue $c={GREEN}><Fit w={101}>48.05</Fit></StatValue></Stat>
          <Stat><StatLabel><Fit w={42}>开</Fit></StatLabel><StatValue $c="#c94740"><Fit w={101}>49.80</Fit></StatValue></Stat>
        </StatCol>
        <StatCol $w={240}>
          <Stat><StatLabel><Fit w={86}>市值</Fit></StatLabel><StatValue><Fit w={142}>70.02亿</Fit></StatValue></Stat>
          <Stat><StatLabel><Fit w={86}>流通</Fit></StatLabel><StatValue><Fit w={143}>69.29亿</Fit></StatValue></Stat>
          <Stat>
            <StatLabel><Fit w={84}>市盈</Fit><Sup><Fit w={44}>TTM</Fit></Sup></StatLabel>
            <StatValue><Fit w={97}>30.46</Fit></StatValue>
          </Stat>
        </StatCol>
        <StatCol $w={241}>
          <Stat><StatLabel><Fit w={86}>量比</Fit></StatLabel><StatValue $c="#c94740"><Fit w={73}>1.17</Fit></StatValue></Stat>
          <Stat><StatLabel><Fit w={42}>换</Fit></StatLabel><StatValue><Fit w={113}>4.11%</Fit></StatValue></Stat>
          <Stat><StatLabel><Fit w={42}>额</Fit></StatLabel><StatValue><Fit w={122}>2.82亿</Fit></StatValue></Stat>
        </StatCol>
        <Corner />
      </Quote>

      <Notice>
        <NoticeLogo>
          <LogoBubble><Fit w={68}>同花顺</Fit></LogoBubble>
          <LogoText><Fit w={66}>速递</Fit></LogoText>
        </NoticeLogo>
        <NoticeText>
          <Fit w={84}>将于</Fit>
          <Fit w={239}>2025-08-29</Fit>
          <Fit w={83}>披露</Fit>
          <Fit w={35}>《</Fit>
          <Fit w={98}>2025</Fit>
          <Fit w={127}>年中报</Fit>
          <Fit w={42}>》</Fit>
        </NoticeText>
        <NoticeClose>
          <svg width="24" height="26" viewBox="0 0 24 26" stroke="#999" strokeWidth="2.500">
            <path d="M1 2L23 24M23 2L1 24" />
          </svg>
        </NoticeClose>
      </Notice>
      <Band />

      <PeriodTabs>
        <Period $active><Fit w={80}>分时</Fit></Period>
        <Period $ml={76}><Fit w={66}>日K</Fit></Period>
        <Period $ml={73}><Fit w={69}>周K</Fit></Period>
        <Period $ml={74}><Fit w={67}>月K</Fit></Period>
        <Period $ml={72}><Fit w={81}>五日</Fit></Period>
        <Period $ml={80}>
          <Fit w={81}>更多</Fit>
          <Triangle w={22} h={19} dir="down" color="#aaa" />
        </Period>
        <HexCell>
          <svg width="50" height="48" viewBox="0 0 50 48" fill="none" stroke="#999" strokeWidth="4">
            <path d="M14 3H36Q37 3 38 5L47 22Q48 24 47 26L38 43Q37 45 36 45H14Q13 45 12 43L3 26Q2 24 3 22L12 5Q13 3 14 3z" />
            <circle cx="25" cy="24" r="7.500" />
          </svg>
        </HexCell>
      </PeriodTabs>

      <Legend>
        <LegendName><Fit w={143}>集合竞价</Fit></LegendName>
        <LegendLines>
          <LegendLine>
            <LegendItem $c={GOLD} $mr={22}><Fit w={149}>均价:50.73</Fit></LegendItem>
            <LegendItem $c={DARK} $mr={26}><Fit w={151}>最新:51.30</Fit></LegendItem>
            <LegendItem $c="#c94740" $mr={24}><Fit w={56}>1.55</Fit></LegendItem>
            <LegendItem $c="#c94740"><Fit w={102}>+3.12%</Fit></LegendItem>
          </LegendLine>
          <LegendLine>
            <LegendItem $c={BLUE} $mr={9}><Fit w={243}>天普股份:−1.51%</Fit></LegendItem>
            <Triangle w={18} h={13} dir="down" color={BLUE} />
          </LegendLine>
        </LegendLines>
      </Legend>

      <Market>
        <Chart />
        <OrderBook />
      </Market>

      <Danmaku>
        <InputPill>
          <DanToggle>
            <Fit w={41}>弹</Fit>
            <DanCheck>
              <svg width="26" height="26" viewBox="0 0 26 26">
                <circle cx="13" cy="13" r="11.500" fill="#d9463d" stroke="#fff" strokeWidth="2" />
                <path d="M8 13L12 17L18 10" fill="none" stroke="#fff" strokeWidth="2.500" />
              </svg>
            </DanCheck>
          </DanToggle>
          <DanHint><Fit w={300}>发条弹幕见证A股</Fit></DanHint>
          <GiftCell><Gift /></GiftCell>
        </InputPill>
        <Votes>
          <Vote $up><Fit w={154}>看涨 57%</Fit></Vote>
          <Vote><Fit w={154}>看跌 43%</Fit></Vote>
        </Votes>
      </Danmaku>
      <Band />

      <SectionTabs>
        <SectionTab><Fit w={88}>看点</Fit></SectionTab>
        <SectionTab $ml={68}><Fit w={88}>资讯</Fit></SectionTab>
        <SectionTab $ml={68}><Fit w={88}>盘口</Fit></SectionTab>
        <SectionTab $ml={68}><Fit w={88}>资金</Fit></SectionTab>
        <SectionTab $ml={63} $active><Fit w={99}>社区</Fit></SectionTab>
        <SectionTab $ml={59} $fade><Fit w={194}>简况(F10)</Fit></SectionTab>
      </SectionTabs>

      <BottomBar>
        <Sector>
          <Triangle w={27} h={15} dir="up" color="#b5b5b5" />
          <SectorName><Fit w={178}>汽车零部件</Fit></SectorName>
          <SectorChange><Fit w={123}>-0.25%</Fit></SectorChange>
        </Sector>
        <Action>
          <svg width="52" height="58" viewBox="0 0 52 58" fill="none" stroke="#d9d9d9" strokeWidth="3">
            <path d="M8 3H44Q50 3 50 9V44L39 56H8Q2 56 2 50V9Q2 3 8 3z" />
            <path d="M9 17H43M9 24.500H43M9 32H43M9 39H33" />
          </svg>
          <ActionLabel>下单</ActionLabel>
        </Action>
        <Action>
          <svg width="60" height="58" viewBox="0 0 60 58" fill="none" stroke="#d9d9d9" strokeWidth="3">
            <rect x="2" y="12" width="56" height="42" rx="6" />
            <path d="M19 6H41M30 22V44M20 33H40M10 56H21M39 56H50" />
          </svg>
          <ActionLabel>诊股</ActionLabel>
        </Action>
        <Action>
          <svg width="52" height="58" viewBox="0 0 52 58" fill="none" stroke="#d9d9d9" strokeWidth="3">
            <rect x="2" y="5" width="47" height="47" />
            <path d="M13 29H38" />
          </svg>
          <ActionLabel>删自选</ActionLabel>
        </Action>
        <Action>
          <svg width="54" height="58" viewBox="0 0 54 58" fill="none" stroke="#d9d9d9" strokeWidth="3">
            <circle cx="27" cy="29" r="24" />
            <path d="M16 22H38M16 36H38" />
          </svg>
          <ActionLabel>功能</ActionLabel>
          <Dot />
        </Action>
        <HomeBar />
      </BottomBar>
    </Page>
  );
}

export default App;
